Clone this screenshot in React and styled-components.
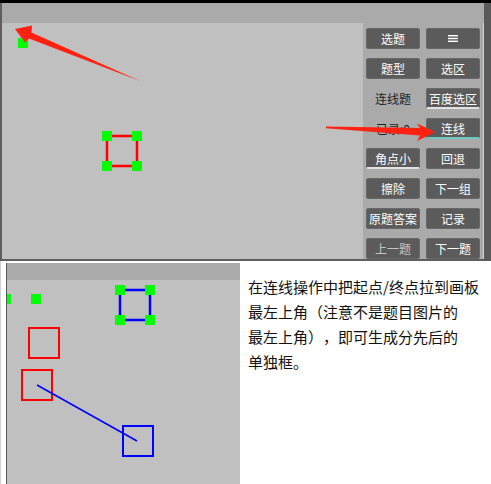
import styled, { createGlobalStyle } from "styled-components";

const GlobalStyle = createGlobalStyle`
  html, body { margin: 0; padding: 0; background: #fff; }
  body {
    width: 491px;
    height: 484px;
    overflow: hidden;
    font-family: "Noto Sans CJK SC", "Noto Sans", sans-serif;
  }
`;

const Page = styled.div`
  position: relative;
  width: 491px;
  height: 484px;
  display: flex;
  flex-direction: column;
`;

const TopShot = styled.div`
  display: flex;
  height: 261px;
  box-sizing: border-box;
  border-top: 3px solid #000;
`;

const Window = styled.div`
  width: 484px;
  box-sizing: border-box;
  display: flex;
  padding-top: 20px;
  background: #aaaaaa;
  border-left: 2px solid #5e5e5e;
  border-bottom: 2px solid #5e5e5e;
`;

const Canvas = styled.div`
  width: 361px;
  background: #c0c0c0;
  svg { display: block; }
`;

const Panel = styled.div`
  flex: 1;
  overflow: hidden;
  display: grid;
  grid-template-columns: 54px 54px;
  grid-auto-rows: 21px;
  column-gap: 6px;
  row-gap: 9px;
  align-content: start;
  padding: 5px 0 0 3px;
  border-right: 1px solid #d2d2d2;
`;

const WindowEdge = styled.div`
  flex: 1;
  background: #5a5a5a;
`;

const Btn = styled.div`
  box-sizing: border-box;
  display: flex;
  align-items: center;
  justify-content: center;
  background: #5b5b5b;
  border: 1px solid #686868;
  border-bottom: ${(p) => (p.$line ? `2px solid ${p.$line}` : "1px solid #686868")};
  border-radius: 2px;
  color: ${(p) => (p.$dim ? "#c4c4c4" : "#fff")};
  font-size: 12px;
  white-space: nowrap;
`;

const Label = styled.div`
  display: flex;
  align-items: center;
  justify-content: center;
  color: #1e1e1e;
  font-size: 12px;
  white-space: nowrap;
`;

const Overlay = styled.svg`
  position: absolute;
  left: 0;
  top: 0;
  pointer-events: none;
`;

const BottomRow = styled.div`
  flex: 1;
  display: flex;
`;

const SecondShot = styled.div`
  width: 240px;
  box-sizing: border-box;
  display: flex;
  flex-direction: column;
  padding: 2px 0 0 5px;
  border-left: 1px solid #d0d0d0;
`;

const ShotFrame = styled.div`
  flex: 1;
  display: flex;
  flex-direction: column;
  background: #c0c0c0;
  border-left: 1px solid #5a5a5a;
`;

const ShotHeader = styled.div`
  height: 17px;
  background: #aaaaaa;
`;

const ShotCanvas = styled.div`
  flex: 1;
  overflow: hidden;
  svg { display: block; }
`;

const Note = styled.div`
  padding: 13px 0 0 8px;
  font-size: 15px;
  line-height: 25px;
  color: #111;
  white-space: nowrap;
  text-spacing-trim: space-all;
`;

const Menu = () => (
  <svg width="10" height="7" viewBox="0 0 10 7">
    <rect x="0" y="0" width="10" height="1.4" fill="#fff" />
    <rect x="0" y="2.8" width="10" height="1.4" fill="#fff" />
    <rect x="0" y="5.6" width="10" height="1.4" fill="#fff" />
  </svg>
);

const Dot = ({ x, y }) => <rect x={x} y={y} width="10" height="10" fill="#00ff00" />;

export default function App() {
  return (
    <Page>
      <GlobalStyle />
      <TopShot>
        <Window>
          <Canvas>
            <svg width="361" height="236">
              <Dot x={16} y={15} />
              <g stroke="#ff0000" strokeWidth="2.5" fill="none">
                <rect x="105" y="113" width="30" height="30" />
              </g>
              <Dot x={100} y={108} />
              <Dot x={130} y={108} />
              <Dot x={100} y={138} />
              <Dot x={130} y={138} />
            </svg>
          </Canvas>
          <Panel>
            <Btn>选题</Btn>
            <Btn><Menu /></Btn>
            <Btn>题型</Btn>
            <Btn>选区</Btn>
            <Label>连线题</Label>
            <Btn $line="#e2e2e2">百度选区</Btn>
            <Label>已录:0</Label>
            <Btn $line="#6cc9be">连线</Btn>
            <Btn $line="#e2e2e2">角点小</Btn>
            <Btn>回退</Btn>
            <Btn>擦除</Btn>
            <Btn>下一组</Btn>
            <Btn>原题答案</Btn>
            <Btn>记录</Btn>
            <Btn $dim>上一题</Btn>
            <Btn>下一题</Btn>
          </Panel>
        </Window>
        <WindowEdge />
      </TopShot>

      <BottomRow>
        <SecondShot>
          <ShotFrame>
            <ShotHeader />
            <ShotCanvas>
              <svg width="233" height="204">
                <Dot x={-6} y={14} />
                <Dot x={24} y={14} />
                <rect x="113" y="10" width="30" height="30" stroke="#0000ff" strokeWidth="2.5" fill="none" />
                <Dot x={108} y={5} />
                <Dot x={138} y={5} />
                <Dot x={108} y={35} />
                <Dot x={138} y={35} />
                <rect x="22" y="48" width="30" height="30" stroke="#ff0000" strokeWidth="2" fill="none" />
                <rect x="15" y="90" width="30" height="30" stroke="#ff0000" strokeWidth="2" fill="none" />
                <line x1="30" y1="105" x2="130" y2="161" stroke="#0000ff" strokeWidth="1.6" />
                <rect x="116" y="146" width="30" height="30" stroke="#0000ff" strokeWidth="2" fill="none" />
              </svg>
            </ShotCanvas>
          </ShotFrame>
        </SecondShot>
        <Note>
          在连线操作中把起点/终点拉到画板
          <br />
          最左上角（注意不是题目图片的
          <br />
          最左上角），即可生成分先后的
          <br />
          单独框。
        </Note>
      </BottomRow>

      <Overlay width="491" height="262">
        <polygon
          points="15,29 32,25.5 31.5,32.5 140,81 29,38.5 25,42.5"
          fill="#ff2211"
        />
        <polygon
          points="326,126.5 420,128 417,123.5 435,132 417,141 420,135.5 326,128.3"
          fill="#ff2211"
        />
      </Overlay>
    </Page>
  );
}
